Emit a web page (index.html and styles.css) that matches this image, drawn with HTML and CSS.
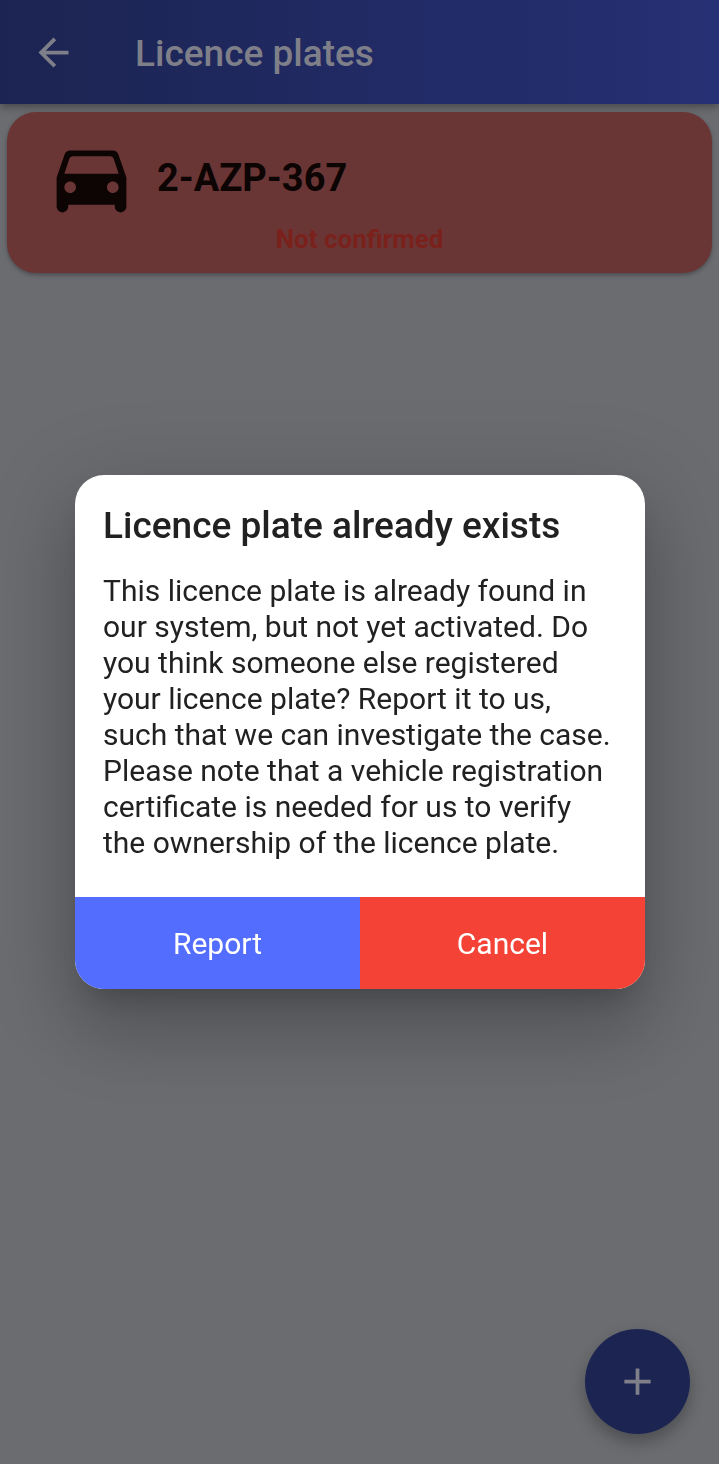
FILE: index.html
```html
<!DOCTYPE html>
<html lang="en">
<head>
<meta charset="utf-8">
<meta name="viewport" content="width=device-width, initial-scale=1">
<title>Licence plates</title>
<link rel="stylesheet" href="styles.css">
</head>
<body>
<div class="screen">
  <header class="app-bar">
    <button class="back" type="button" aria-label="Back">
      <svg viewBox="0 0 24 24" aria-hidden="true"><path d="M20 11H7.83l5.59-5.59L12 4l-8 8 8 8 1.41-1.41L7.83 13H20v-2z"/></svg>
    </button>
    <h1 class="app-title">Licence plates</h1>
  </header>
  <main class="plates">
    <article class="plate-card">
      <div class="plate-row">
        <svg class="car" viewBox="0 0 24 24" aria-hidden="true"><path d="M18.92 6.01C18.72 5.42 18.16 5 17.5 5h-11c-.66 0-1.21.42-1.42 1.01L3 12v7.5c0 .83.67 1.5 1.5 1.5S6 20.33 6 19.5V19h12v.5c0 .83.67 1.5 1.5 1.5s1.5-.67 1.5-1.5V12l-2.08-5.99zM6.5 16c-.83 0-1.5-.67-1.5-1.5S5.67 13 6.5 13s1.5.67 1.5 1.5S7.33 16 6.5 16zm11 0c-.83 0-1.5-.67-1.5-1.5s.67-1.5 1.5-1.5 1.5.67 1.5 1.5-.67 1.5-1.5 1.5zM5 11l1.27-3.82c.14-.4.52-.68.95-.68h9.56c.43 0 .81.28.95.68L19 11H5z"/></svg>
        <h2 class="plate-number">2-AZP-367</h2>
      </div>
      <p class="plate-status">Not confirmed</p>
    </article>
  </main>
  <button class="fab" type="button" aria-label="Add licence plate">
    <svg viewBox="0 0 24 24" aria-hidden="true"><path d="M19 13h-6v6h-2v-6H5v-2h6V5h2v6h6v2z"/></svg>
  </button>
</div>
<div class="scrim">
  <section class="dialog" role="dialog" aria-modal="true" aria-labelledby="dialog-title">
    <div class="dialog-content">
      <h2 class="dialog-title" id="dialog-title">Licence plate already exists</h2>
      <p class="dialog-text">This licence plate is already found in our system, but not yet activated. Do you think someone else registered your licence plate? Report it to us, such that we can investigate the case. Please note that a vehicle registration certificate is needed for us to verify the ownership of the licence plate.</p>
    </div>
    <div class="dialog-actions">
      <button class="action report" type="button">Report</button>
      <button class="action cancel" type="button">Cancel</button>
    </div>
  </section>
</div>
</body>
</html>
```
FILE: styles.css
```css
* {
  box-sizing: border-box;
}

body {
  margin: 0;
  font-family: Roboto, "Liberation Sans", sans-serif;
}

h1, h2, p {
  margin: 0;
}

button {
  border: 0;
  padding: 0;
  font: inherit;
  cursor: pointer;
}

svg {
  display: block;
  fill: currentColor;
}

.screen {
  min-height: 100vh;
  background: #6b6c70;
}

.app-bar {
  display: flex;
  align-items: center;
  gap: 59px;
  height: 104px;
  padding: 0 31px;
  color: #7e7f88;
  background: linear-gradient(90deg, #1c2452, #263074);
  box-shadow: 0 3px 8px rgba(0, 0, 0, 0.35);
}

.back {
  color: inherit;
  background: none;
}

.back svg {
  width: 45px;
  height: 45px;
}

.app-title {
  padding-top: 4px;
  font-size: 37px;
  font-weight: 500;
  line-height: 44px;
}

.plates {
  padding: 8px 7px;
}

.plate-card {
  padding: 19px 38px;
  border-radius: 29px;
  background: #6a3635;
  box-shadow: 0 2px 4px rgba(0, 0, 0, 0.3);
}

.plate-row {
  display: flex;
  align-items: center;
  gap: 19px;
}

.car {
  width: 93px;
  height: 93px;
  color: #0d0404;
}

.plate-number {
  color: #0d0404;
  font-size: 38px;
  font-weight: 700;
  line-height: 44px;
}

.plate-status {
  color: #7a211c;
  font-size: 26px;
  font-weight: 700;
  line-height: 30px;
  text-align: center;
}

.fab {
  position: fixed;
  right: 29px;
  bottom: 30px;
  display: grid;
  place-items: center;
  width: 105px;
  height: 105px;
  border-radius: 50%;
  color: #7e7f88;
  background: #1c2452;
  box-shadow: 0 8px 16px rgba(0, 0, 0, 0.28);
}

.fab svg {
  width: 45px;
  height: 45px;
}

.scrim {
  position: fixed;
  inset: 0;
  display: grid;
  place-items: center;
  padding: 0 74px 0 75px;
}

.dialog {
  width: 100%;
  overflow: hidden;
  border-radius: 29px;
  color: #212121;
  background: #ffffff;
  box-shadow:
    0 20px 28px -13px rgba(0, 0, 0, 0.2),
    0 45px 71px 6px rgba(0, 0, 0, 0.14),
    0 17px 86px 15px rgba(0, 0, 0, 0.12);
}

.dialog-content {
  padding: 29px 28px 36px;
}

.dialog-title {
  margin-bottom: 25px;
  font-size: 37px;
  font-weight: 500;
  line-height: 44px;
}

.dialog-text {
  font-size: 30px;
  line-height: 36px;
}

.dialog-actions {
  display: grid;
  grid-template-columns: 1fr 1fr;
}

.action {
  height: 92px;
  color: #ffffff;
  font-size: 30px;
}

.report {
  background: #536dfe;
}

.cancel {
  background: #f44336;
}
```
